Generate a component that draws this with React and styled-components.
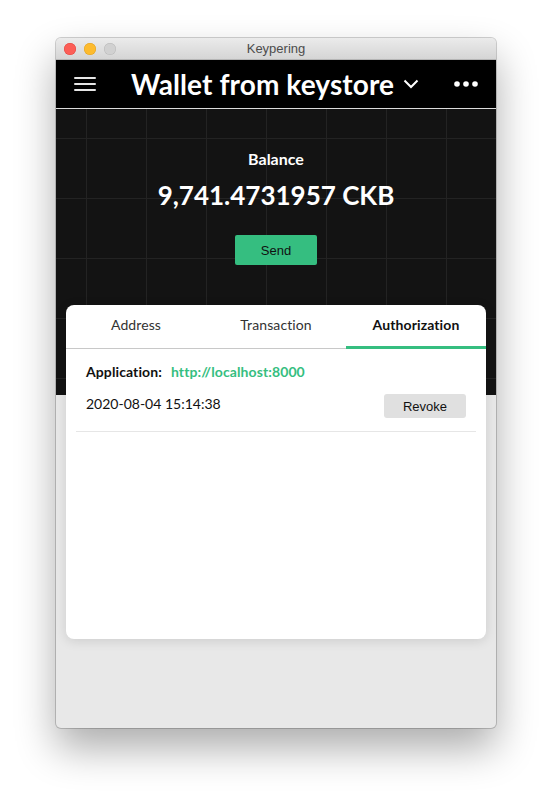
import React, { useState } from "react";
import styled, { createGlobalStyle } from "styled-components";

const GlobalStyle = createGlobalStyle`
  html, body { margin: 0; padding: 0; background: #fff; }
  * { box-sizing: border-box; }
`;

const Page = styled.div`
  padding: 38px 0 0 56px;
  height: 802px;
`;

const Window = styled.div`
  width: 440px;
  height: 690px;
  border-radius: 5px;
  overflow: hidden;
  background: #e8e8e8;
  box-shadow: 0 0 0 1px rgba(0,0,0,.18), 0 20px 40px rgba(0,0,0,.33);
  display: flex;
  flex-direction: column;
`;

const TitleBar = styled.div`
  height: 22px;
  flex: none;
  display: grid;
  grid-template-columns: 1fr auto 1fr;
  align-items: center;
  padding: 0 8px;
  background: linear-gradient(#ebebeb, #d5d5d5);
  border-bottom: 1px solid #b5b5b5;
  font-family: "Liberation Sans", Arial, sans-serif;
  font-size: 13px;
  color: #4c4c4c;
`;

const Lights = styled.div`
  display: flex;
  gap: 8px;
`;

const Light = styled.span`
  width: 12px;
  height: 12px;
  border-radius: 50%;
  background: ${p => p.color};
  box-shadow: inset 0 0 0 0.5px ${p => p.edge};
`;

const Header = styled.header`
  height: 49px;
  flex: none;
  background: #000;
  border-bottom: 1px solid #dcdcdc;
  display: flex;
  align-items: center;
  padding: 0 18px;
  color: #fff;
  font-family: Lato, "Open Sans", sans-serif;
`;

const IconButton = styled.button`
  background: none;
  border: 0;
  padding: 0;
  display: flex;
  align-items: center;
  color: #e6e6e6;
`;

const WalletTitle = styled.div`
  flex: 1;
  display: flex;
  align-items: center;
  justify-content: center;
  gap: 9px;
  font-size: 28px;
  font-weight: 700;
  letter-spacing: 0.1px;
`;

const Hero = styled.section`
  height: 286px;
  flex: none;
  background-color: #131313;
  background-image:
    linear-gradient(90deg, #232323 1px, transparent 1px),
    linear-gradient(#232323 1px, transparent 1px);
  background-size: 60px 60px;
  background-position: 30px 29px;
  display: flex;
  flex-direction: column;
  align-items: center;
  padding-top: 40px;
  color: #fff;
  font-family: Lato, "Open Sans", sans-serif;
`;

const BalanceLabel = styled.div`
  font-size: 16px;
  font-weight: 700;
  line-height: 20px;
`;

const BalanceValue = styled.div`
  font-size: 26px;
  font-weight: 700;
  line-height: 32px;
  margin-top: 10px;
`;

const SendButton = styled.button`
  margin-top: 24px;
  width: 82px;
  height: 30px;
  border: 0;
  border-radius: 2px;
  background: #35be80;
  color: #111;
  font-family: "Liberation Sans", Arial, sans-serif;
  font-size: 13px;
`;

const Card = styled.div`
  position: relative;
  margin: -90px 10px 0;
  height: 334px;
  background: #fff;
  border-radius: 8px;
  box-shadow: 0 2px 12px rgba(0,0,0,.12);
  font-family: Lato, "Open Sans", sans-serif;
  overflow: hidden;
`;

const Tabs = styled.div`
  display: grid;
  grid-template-columns: repeat(3, 1fr);
  border-bottom: 1px solid #c8c8c8;
`;

const Tab = styled.button`
  height: 44px;
  background: none;
  border: 0;
  border-bottom: 3px solid ${p => (p.active ? "#35be80" : "transparent")};
  margin-bottom: -1px;
  padding: 0 0 2px;
  font-family: Lato, "Open Sans", sans-serif;
  font-size: 14px;
  letter-spacing: 0.1px;
  font-weight: ${p => (p.active ? 700 : 400)};
  color: ${p => (p.active ? "#111" : "#333")};
`;

const Item = styled.div`
  margin: 0 10px;
  padding: 13px 10px 13px;
  border-bottom: 1px solid #e6e6e6;
`;

const AppLine = styled.div`
  display: flex;
  gap: 9px;
  font-size: 14px;
  font-weight: 700;
  letter-spacing: 0.1px;
  line-height: 20px;
  color: #111;
`;

const Url = styled.span`
  color: #35be80;
`;

const DateRow = styled.div`
  margin-top: 12px;
  display: flex;
  align-items: center;
  justify-content: space-between;
  font-size: 14px;
  color: #111;
`;

const DateText = styled.span`
  margin-top: -5px;
`;

const RevokeButton = styled.button`
  width: 82px;
  height: 24px;
  border: 0;
  border-radius: 3px;
  background: #e0e0e0;
  color: #111;
  font-family: "Liberation Sans", Arial, sans-serif;
  font-size: 13px;
`;

const Menu = () => (
  <svg width="22" height="16" viewBox="0 0 22 16">
    <g stroke="currentColor" strokeWidth="2" strokeLinecap="round">
      <line x1="1" y1="2" x2="21" y2="2" />
      <line x1="1" y1="8" x2="21" y2="8" />
      <line x1="1" y1="14" x2="21" y2="14" />
    </g>
  </svg>
);

const Chevron = () => (
  <svg width="16" height="10" viewBox="0 0 16 10">
    <polyline points="1.5,1.5 8,8 14.5,1.5" fill="none" stroke="#fff" strokeWidth="2" />
  </svg>
);

const More = () => (
  <svg width="24" height="6" viewBox="0 0 24 6">
    <g fill="#fff">
      <circle cx="3" cy="3" r="2.8" />
      <circle cx="12" cy="3" r="2.8" />
      <circle cx="21" cy="3" r="2.8" />
    </g>
  </svg>
);

export default function App() {
  const [tab, setTab] = useState("Authorization");
  const tabs = ["Address", "Transaction", "Authorization"];

  return (
    <Page>
      <GlobalStyle />
      <Window>
        <TitleBar>
          <Lights>
            <Light color="#fc5e57" edge="#e2463f" />
            <Light color="#fdbb2e" edge="#e0a123" />
            <Light color="#d1d1d1" edge="#b8b8b8" />
          </Lights>
          <span>Keypering</span>
          <span />
        </TitleBar>
        <Header>
          <IconButton><Menu /></IconButton>
          <WalletTitle>
            Wallet from keystore
            <Chevron />
          </WalletTitle>
          <IconButton><More /></IconButton>
        </Header>
        <Hero>
          <BalanceLabel>Balance</BalanceLabel>
          <BalanceValue>9,741.4731957 CKB</BalanceValue>
          <SendButton>Send</SendButton>
        </Hero>
        <Card>
          <Tabs>
            {tabs.map(t => (
              <Tab key={t} active={t === tab} onClick={() => setTab(t)}>{t}</Tab>
            ))}
          </Tabs>
          <Item>
            <AppLine>
              Application:
              <Url>http://localhost:8000</Url>
            </AppLine>
            <DateRow>
              <DateText>2020-08-04 15:14:38</DateText>
              <RevokeButton>Revoke</RevokeButton>
            </DateRow>
          </Item>
        </Card>
      </Window>
    </Page>
  );
}
